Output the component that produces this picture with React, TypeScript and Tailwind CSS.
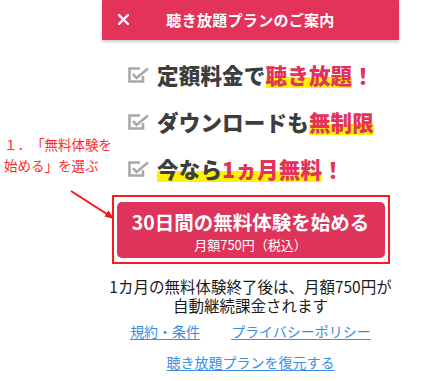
import React from 'react';

const jp = "font-['Noto_Sans_CJK_JP','Noto_Sans',sans-serif]";
const mark = 'bg-[linear-gradient(transparent_58%,#fff200_58%,#fff200_94%,transparent_94%)]';

const CheckBox: React.FC = () => (
  <svg width="22" height="16" viewBox="0 0 22 16" className="shrink-0">
    <path d="M12 1.5H1.5V14.5H15V9" fill="none" stroke="#a8a8a8" strokeWidth="2.6" />
    <path d="M5 7l3.5 4L20 1.5" fill="none" stroke="#a8a8a8" strokeWidth="2.6" />
  </svg>
);

const Row: React.FC<{ children: React.ReactNode }> = ({ children }) => (
  <div className="h-[47px] flex items-center gap-[7px] pl-[26px]">
    <CheckBox />
    <div className="text-[21.5px] font-black leading-none text-[#3d3d3d] tracking-[0.2px]">{children}</div>
  </div>
);

export default function App() {
  return (
    <div className={`relative w-[434px] h-[381px] bg-white overflow-hidden [text-spacing-trim:space-all] ${jp}`}>
      {/* annotation overlay */}
      <div className="absolute left-[4px] top-[134px] w-[126px] text-[13.5px] leading-[21px] text-[#ff2a2a]">
        １．「無料体験を
        <br />
        始める」を選ぶ
      </div>
      <svg className="absolute left-0 top-0" width="434" height="381">
        <line x1="71" y1="191" x2="110" y2="216" stroke="#ff1010" strokeWidth="2" />
        <path d="M114 219l-9.5-2.5 4-6z" fill="#ff1010" />
      </svg>

      <div className="ml-[102px] w-[297px] flex flex-col">
        {/* header */}
        <div className="relative h-[40px] bg-[#e3335b] shadow-[0_2px_3px_rgba(0,0,0,0.2)] flex items-center justify-center">
          <svg className="absolute left-[16px] top-[14px]" width="11" height="11" viewBox="0 0 11 11">
            <path d="M1 1l9 9M10 1l-9 9" stroke="#fff" strokeWidth="2.4" strokeLinecap="square" />
          </svg>
          <span className="text-white text-[15px] font-bold tracking-[0.3px]">聴き放題プランのご案内</span>
        </div>

        {/* features */}
        <div className="pt-[11px]">
          <Row>
            定額料金で<span className={`text-[#e3335b] ${mark}`}>聴き放題</span>
            <span className="text-[#e3335b]">！</span>
          </Row>
          <Row>
            ダウンロードも<span className={`text-[#e3335b] ${mark}`}>無制限</span>
          </Row>
          <Row>
            <span className={mark}>
              今なら<span className="text-[#e3335b]">1ヵ月無料</span>
            </span>
            <span className="text-[#e3335b]">！</span>
          </Row>
        </div>

        {/* CTA */}
        <div className="mt-[3px] mx-auto w-[278px] border-2 border-[#ff1a1a] pt-[5px] pb-[4px] px-[3px]">
          <div className="h-[56px] rounded-[5px] bg-[#de335a] flex flex-col items-center pt-[7px] text-white">
            <div className="text-[19.5px] font-bold leading-[26px]">30日間の無料体験を始める</div>
            <div className="text-[13px] leading-[20px]">月額750円（税込）</div>
          </div>
        </div>

        <div className="mt-[13px] text-center text-[15.5px] leading-[19px] text-[#1a1a1a]">
          <div>1カ月の無料体験終了後は、月額750円が</div>
          <div>自動継続課金されます</div>
        </div>

        <div className="mt-[6px] flex justify-center gap-[31px] text-[14px] leading-[20px] text-[#3a8ee6]">
          <span className="underline underline-offset-2">規約・条件</span>
          <span className="underline underline-offset-2">プライバシーポリシー</span>
        </div>

        <div className="mt-[11px] text-center text-[14px] leading-[20px] text-[#3a8ee6]">
          <span className="underline underline-offset-2">聴き放題プランを復元する</span>
        </div>
      </div>
    </div>
  );
}
